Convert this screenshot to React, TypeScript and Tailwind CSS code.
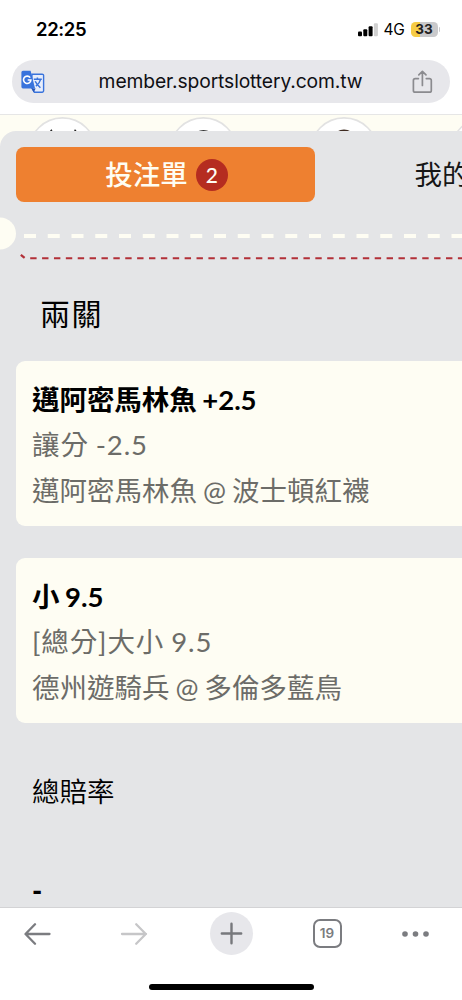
import type { ReactNode } from "react";

const UI = "font-['Inter','Noto_Sans_CJK_TC',sans-serif]";
const BODY = "font-['Lato','Noto_Sans_CJK_TC',sans-serif]";

function StatusBar() {
  return (
    <div className="flex h-[60px] items-start justify-between pl-[36px] pr-[22px] pt-[17px]">
      <span className="text-[18.5px] font-semibold leading-[25px] tracking-[-0.4px] text-black">22:25</span>
      <div className="flex h-[25px] items-center">
        <svg width="22" height="16" viewBox="0 0 22 16" className="mr-[5px]">
          <rect x="1" y="9.5" width="4" height="4.8" rx="1" fill="#000" />
          <rect x="6.3" y="7.3" width="4" height="7" rx="1" fill="#000" />
          <rect x="11.6" y="4.3" width="4" height="10" rx="1" fill="#000" />
          <rect x="16.9" y="1.2" width="4" height="13.1" rx="1" fill="#d0d0d0" />
        </svg>
        <span className="mr-[6px] text-[15.5px] leading-[25px] tracking-[-0.3px] text-black">4G</span>
        <div className="flex h-[15px] w-[27px] items-center justify-center rounded-[4.5px] bg-[linear-gradient(90deg,#f6cc45_33%,#c9c9cb_33%)] text-[13.5px] font-bold leading-[15px] text-[#222]">
          33
        </div>
        <div className="ml-px h-[5px] w-[1.5px] rounded-r-full bg-[#c9c9cb]" />
      </div>
    </div>
  );
}

function TranslateIcon() {
  return (
    <svg width="24" height="24" viewBox="0 0 24 24">
      <path d="M11 4.2h10.2a1.4 1.4 0 0 1 1.4 1.4v15.2a1.4 1.4 0 0 1-1.4 1.4h-7.8l-3-5z" fill="#e7edfb" stroke="#3973dc" strokeWidth="1.4" />
      <path d="M2 .7h7.6l4.5 17.7H2A1.6 1.6 0 0 1 .4 16.8V2.3A1.6 1.6 0 0 1 2 .7z" fill="#3973dc" />
      <path d="M10.7 18.4h4l-2.1 3.8z" fill="#2856b6" />
      <path d="M9.2 7.6A3.7 3.7 0 1 0 9.9 10H6.7" fill="none" stroke="#fff" strokeWidth="1.6" />
      <path d="M12.8 9.2h8M16.4 7.4v1.8M19.6 9.4c-.8 3.1-2.5 5.1-4.7 6.8M14.2 11.3c1.3 2.8 3.2 4.7 5.2 6.5" fill="none" stroke="#3973dc" strokeWidth="1.5" />
    </svg>
  );
}

function AddressBar() {
  return (
    <div className="ml-[12px] mr-[12px] flex h-[43px] items-center rounded-full bg-[#e7e7eb] pl-[9px] pr-[17px]">
      <TranslateIcon />
      <span className="flex-1 pb-[1px] pl-[4px] text-center text-[19.3px] leading-[42px] tracking-[-0.12px] text-[#101014]">
        member.sportslottery.com.tw
      </span>
      <svg width="21" height="24" viewBox="0 0 21 24" fill="none" stroke="#8b8b8f" strokeWidth="1.7" strokeLinecap="round" strokeLinejoin="round">
        <path d="M6.4 8.6H3.2a1.8 1.8 0 0 0-1.8 1.8v10a1.8 1.8 0 0 0 1.8 1.8h14.3a1.8 1.8 0 0 0 1.8-1.8v-10a1.8 1.8 0 0 0-1.8-1.8h-3.2M10.4 15.5V1.3M6.8 4.8l3.6-3.5L14 4.8" />
      </svg>
    </div>
  );
}

function SportsStrip() {
  return (
    <svg width="462" height="30" viewBox="0 0 462 30" className="block shrink-0 bg-[#fefdf3]">
      <path d="M0 .5h462" stroke="#e6e6e6" />
      {[62.5, 203.3, 344, 484.6].map((x) => (
        <circle key={x} cx={x} cy="37.5" r="33.6" fill="#fff" stroke="#e2e2e2" strokeWidth="1.6" />
      ))}
      <path d="M50.5 17l1.5-1.2M74.5 15.8l1.5 1.2" stroke="#222" strokeWidth="1.5" />
      <path d="M197 17.5q6.5-3.2 13 0z" fill="#333" />
      <path d="M337 17.5q7-3.8 14 0z" fill="#3d2a20" />
    </svg>
  );
}

function TicketDivider() {
  return (
    <svg width="462" height="60" viewBox="0 0 462 60" className="block">
      <circle cx="0" cy="31.5" r="16" fill="#fefdf3" />
      <path d="M24 34H462" stroke="#fefdf3" strokeWidth="4" strokeDasharray="12 11.75" />
      <path d="M20.8 52.8l3.8 3" stroke="#b23038" strokeWidth="2.2" />
      <path d="M30.2 56.2H462" stroke="#b23038" strokeWidth="2" strokeDasharray="6.4 5.48" />
    </svg>
  );
}

function BetCard({ pick, children, teams }: { pick: string; children: ReactNode; teams: string }) {
  return (
    <div className="ml-[16px] h-[165px] whitespace-nowrap rounded-l-[9px] bg-[#fefdf3] pl-[16px] pt-[15.5px] text-[27.5px] leading-[45.7px] text-[#6c6c68] [word-spacing:-1px]">
      <div className="font-bold tracking-[-0.05px] text-black">{pick}</div>
      <div className="tracking-[0.9px]">{children}</div>
      <div>{teams}</div>
    </div>
  );
}

function BrowserToolbar() {
  return (
    <div className="h-[93px] shrink-0 border-t border-[#d3d3d5] bg-white">
      <div className="flex h-[51px] items-center pl-[24px] pr-[32px]">
        <svg width="28" height="24" viewBox="0 0 28 24" fill="none" stroke="#7b7c80" strokeWidth="2.3" strokeLinecap="round" strokeLinejoin="round">
          <path d="M25.5 12H2M11 2.3L1.5 12l9.5 9.7" />
        </svg>
        <svg width="28" height="24" viewBox="0 0 28 24" fill="none" stroke="#c6c6c8" strokeWidth="2.3" strokeLinecap="round" strokeLinejoin="round" className="ml-[68px]">
          <path d="M2 12h24M16.2 2.3l9.6 9.7-9.6 9.7" />
        </svg>
        <div className="ml-[61.5px] flex size-[43px] items-center justify-center rounded-full bg-[#e7e7eb]">
          <svg width="23" height="23" viewBox="0 0 23 23" stroke="#77787c" strokeWidth="2.4" strokeLinecap="round">
            <path d="M11.5 1.8v19.4M1.8 11.5h19.4" />
          </svg>
        </div>
        <div className="ml-[60px] flex size-[29px] items-center justify-center rounded-[7px] border-2 border-[#7b7c80] text-[13.5px] font-semibold text-[#7b7c80]">
          19
        </div>
        <svg width="28" height="8" viewBox="0 0 28 8" fill="#7b7c80" className="ml-auto">
          <circle cx="3" cy="4" r="2.8" />
          <circle cx="13.5" cy="4" r="2.8" />
          <circle cx="24" cy="4" r="2.8" />
        </svg>
      </div>
      <div className="mx-auto mt-[25px] h-[6px] w-[165px] rounded-full bg-black" />
    </div>
  );
}

export default function App() {
  return (
    <div className={`flex h-[1000px] w-[462px] flex-col overflow-hidden bg-white ${UI}`}>
      <header className="h-[114px] shrink-0">
        <StatusBar />
        <AddressBar />
      </header>
      <SportsStrip />
      <main className={`-mt-[13px] min-h-0 flex-1 overflow-hidden rounded-tl-[16px] bg-[#e4e5e7] pt-[16px] ${BODY}`}>
        <div className="flex h-[55px] w-[600px] pl-[16px]">
          <div className="flex w-[299px] items-center justify-center gap-[8px] rounded-[8px] bg-[#ee8030] pl-[2px] text-[27.5px] font-medium text-[#fefdf3]">
            <span>投注單</span>
            <span className="flex size-[32px] items-center justify-center rounded-full bg-[#b52c20] text-[21px] leading-[32px]">2</span>
          </div>
          <div className="flex items-center whitespace-nowrap pl-[99.5px] text-[27.5px] text-[#161616]">我的</div>
        </div>
        <TicketDivider />
        <h2 className="h-[99px] pl-[40px] pt-[29px] text-[30px] leading-[45px] tracking-[1.5px] text-black">兩關</h2>
        <BetCard pick="邁阿密馬林魚 +2.5" teams="邁阿密馬林魚 @ 波士頓紅襪">讓分 -2.5</BetCard>
        <div className="h-[32px]" />
        <BetCard pick="小 9.5" teams="德州遊騎兵 @ 多倫多藍鳥">[總分]大小 9.5</BetCard>
        <div className="pl-[32px] pt-[47px] text-[27.5px] font-[350] leading-[44px] text-black">總賠率</div>
        <div className="pl-[32px] pt-[55px] text-[27.5px] font-black leading-[44px] text-black">-</div>
      </main>
      <BrowserToolbar />
    </div>
  );
}
